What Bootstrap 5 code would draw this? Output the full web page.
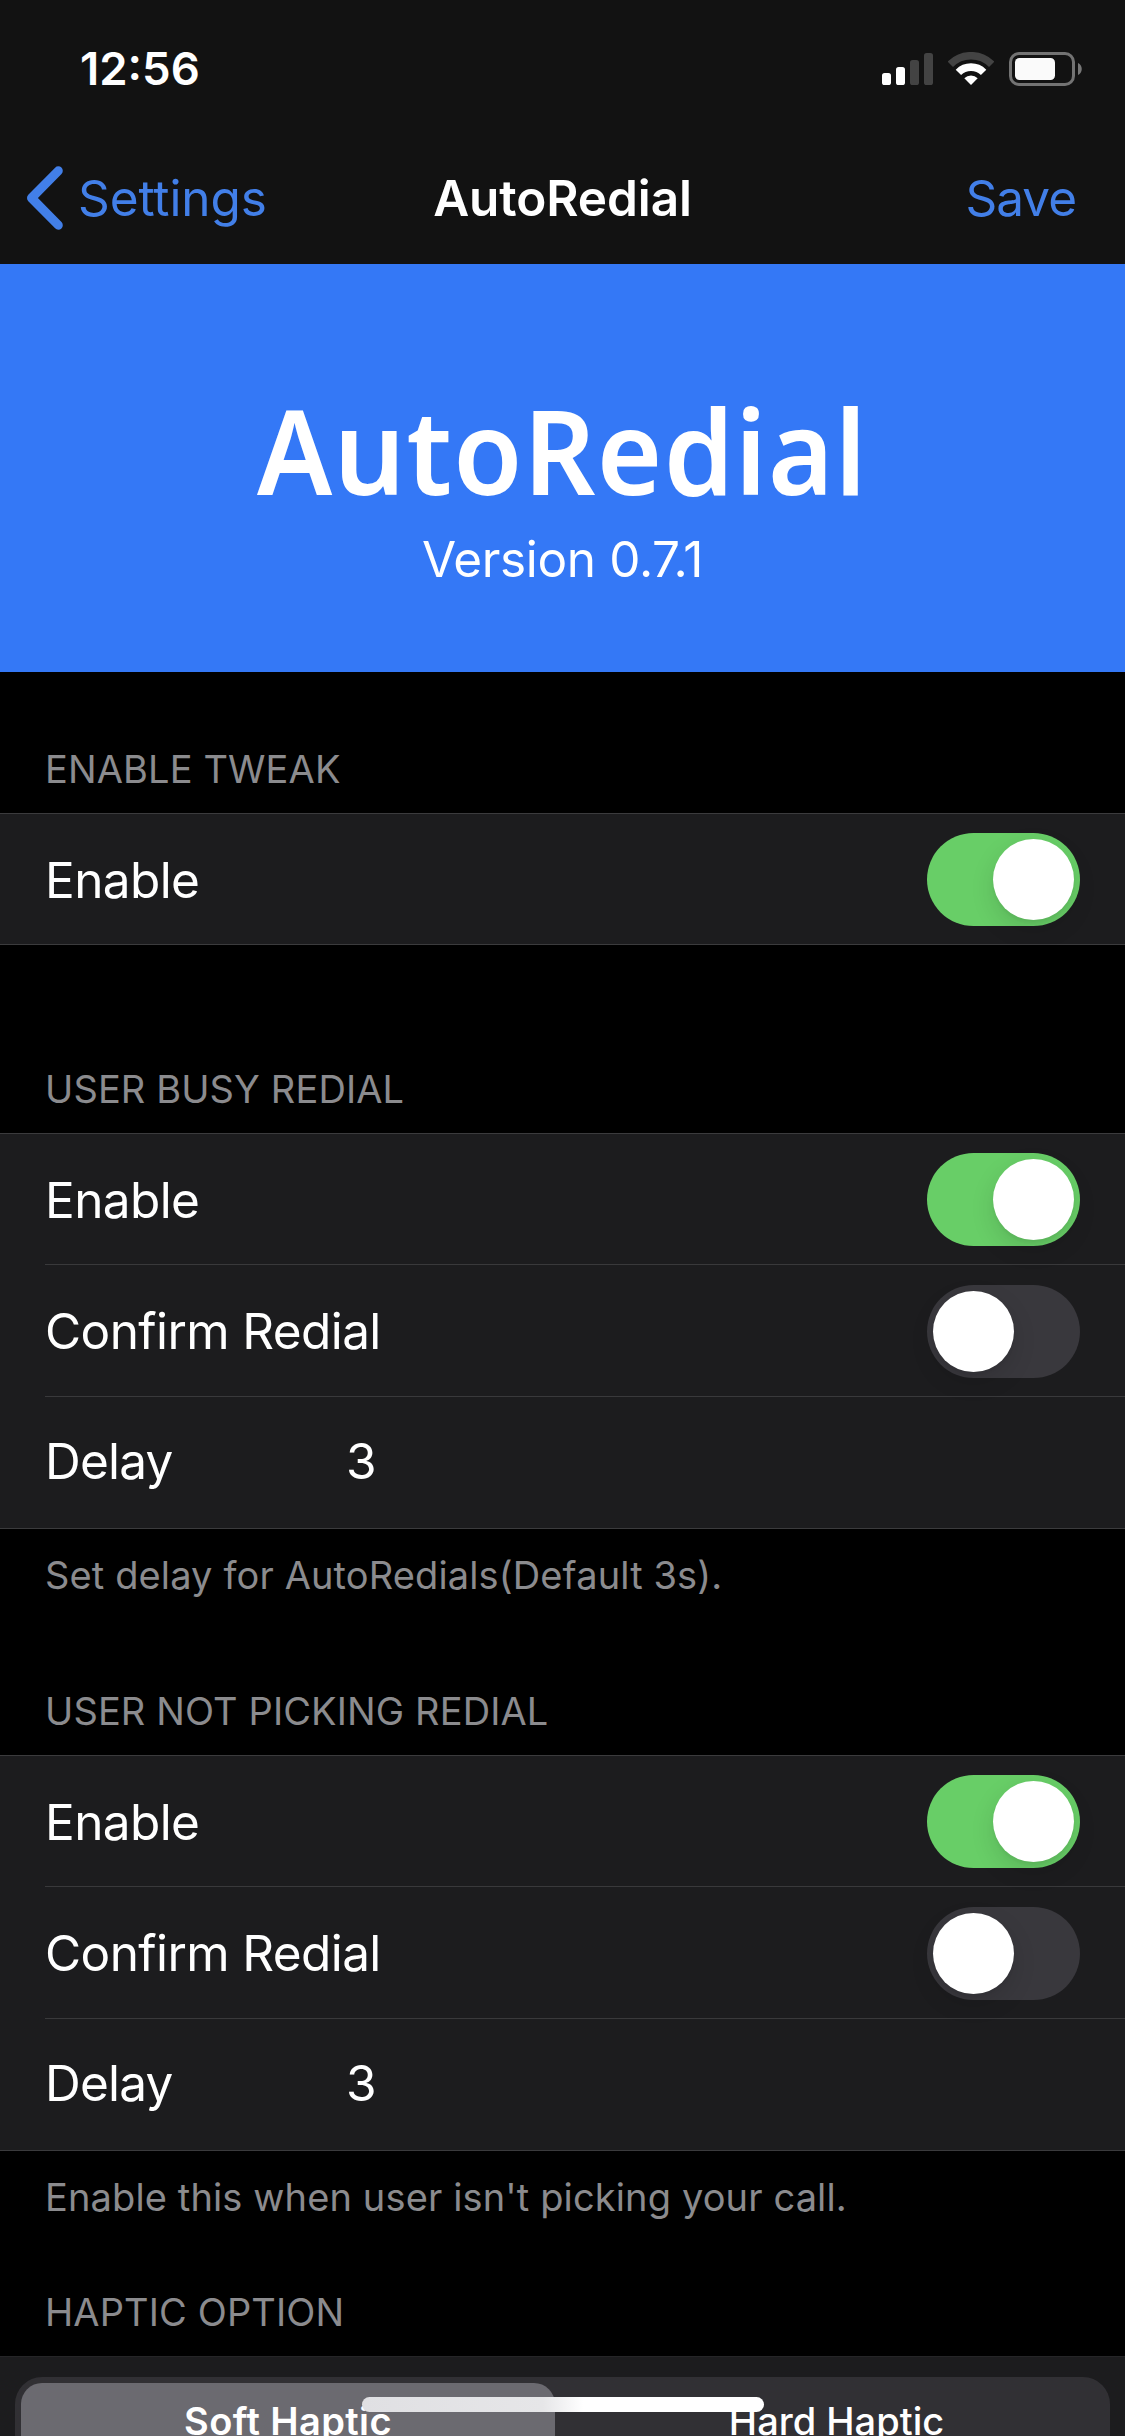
<!DOCTYPE html>
<html lang="en" data-bs-theme="dark">
<head>
<meta charset="utf-8">
<meta name="viewport" content="width=device-width, initial-scale=1">
<title>AutoRedial</title>
<link href="https://cdn.jsdelivr.net/npm/bootstrap@5.3.0/dist/css/bootstrap.min.css" rel="stylesheet">
<style>
  body { background:#000; color:#fff; font-family:Inter,"Liberation Sans",sans-serif; font-size:49.5px; line-height:60px; }
  .phone { height:2436px; }
  .top-area { background:#121212; height:264px; }
  .status-row { height:138px; padding:0 42px 0 80px; }
  .clock { font-size:45.5px; font-weight:600; }
  .status-icons { gap:15px; }
  .title-bar { height:120px; padding:0 26px; }
  .title-bar a { color:#427fe8; text-decoration:none; }
  .back-link { gap:15px; letter-spacing:-.1px; }
  .save-link { letter-spacing:-1px; margin-right:23px; }
  .page-title { font-weight:600; letter-spacing:-.1px; }
  .hero { background:#3478f6; height:408px; padding-top:136px; }
  .hero-title { font:620 118px/100px "Noto Sans","Open Sans",sans-serif; letter-spacing:1.3px; transform:scaleX(.95); }
  .hero-version { font-weight:400; letter-spacing:-.35px; font-feature-settings:"calt" 0; margin-top:29px; }
  .section-head, .section-foot { color:#8b8b8e; font-size:38px; line-height:46px; padding-left:45px; }
  .section-head { padding-bottom:21px; letter-spacing:.12px; }
  .section-foot { padding-top:23px; letter-spacing:.13px; }
  .cells { background:#1c1c1e; border-top:1px solid #3b3b3d; border-bottom:1px solid #3b3b3d; padding-left:45px; }
  .cell-row { height:130px; padding:0 45px 0 0; letter-spacing:-.6px; }
  .cell-row + .cell-row { height:132px; border-top:1px solid #39393b; }
  .cell-row .lbl { padding-top:1px; }
  .cell-row .lbl.field { width:301px; padding:0 0 4px; letter-spacing:-.8px; }
  .cell-row .val { padding-bottom:4px; }
  .cell-row .form-switch { padding:0; min-height:0; margin:0; line-height:0; }
  .cell-row + .cell-row .form-switch { padding-top:1px; }
  .cell-row .form-switch .form-check-input {
    width:153px; height:93px; margin:0; float:none; border:0; border-radius:47px;
    background:#39383d; box-shadow:none; position:relative; }
  .form-switch .form-check-input::before {
    content:""; display:block; width:81px; height:81px; margin:6px; border-radius:50%; background:#fff;
    box-shadow:0 9px 24px rgba(0,0,0,.12),0 3px 3px rgba(0,0,0,.04); }
  .cell-row .form-switch .form-check-input:checked { background:#68ce67; }
  .form-switch .form-check-input:checked::before { margin-left:66px; }
  .haptic { background:#1c1c1e; height:81px; padding:20px 15px 0; border-top:1px solid #252527; }
  .segment { background:#313034; height:96px; border-radius:27px; padding:6px; font-size:38px; line-height:46px; }
  .segment > div { height:84px; padding-top:15px; }
  .segment .chosen { background:#6b6a70; border-radius:21px; font-weight:600; width:534px; flex:none; letter-spacing:.4px; }
  .segment .other { font-weight:500; padding-left:14px; }
  .home-bar { left:362px; bottom:24px; width:402px; height:15px; border-radius:8px; background:linear-gradient(90deg,#e0e0e3,#e6e6e8 45%,#fff 55%); }
</style>
</head>
<body>
<div class="phone position-relative overflow-hidden">
  <header class="top-area">
    <div class="status-row d-flex justify-content-between align-items-center">
      <span class="clock">12:56</span>
      <div class="status-icons d-flex align-items-center">
        <svg width="51" height="34" viewBox="0 0 51 34">
          <rect x="0" y="21" width="9" height="12" rx="2.6" fill="#fff"/>
          <rect x="14" y="15" width="9" height="18" rx="2.6" fill="#fff"/>
          <rect x="28" y="8" width="9" height="25" rx="2.6" fill="#434343"/>
          <rect x="42" y="1" width="9" height="32" rx="2.6" fill="#434343"/>
        </svg>
        <svg width="46" height="34" viewBox="0 0 46 34" fill="none">
          <path d="M2.3 12.3A29.3 29.3 0 0 1 43.7 12.3" stroke="#434343" stroke-width="7.6"/>
          <path d="M10.4 20.4A17.8 17.8 0 0 1 35.6 20.4" stroke="#fff" stroke-width="7.6"/>
          <path d="M23 33l-6.7-6.7A9.6 9.6 0 0 1 29.700 26.300z" fill="#fff"/>
        </svg>
        <svg width="74" height="34" viewBox="0 0 74 34">
          <rect x="1.500" y="1.500" width="63" height="31" rx="8.500" fill="none" stroke="#737373" stroke-width="3"/>
          <rect x="6" y="6" width="40" height="22" rx="4.500" fill="#fafafa"/>
          <path d="M69 11c5 2 5 10 0 12z" fill="#777"/>
        </svg>
      </div>
    </div>
    <nav class="title-bar row g-0 align-items-center">
      <div class="col">
        <a href="#" class="back-link d-flex align-items-center">
          <svg width="37" height="64" viewBox="0 0 37 64"><path d="M32.300 4.800L5.500 32l26.800 27.200" fill="none" stroke="#427fe8" stroke-width="9" stroke-linecap="round" stroke-linejoin="round"/></svg>
          <span>Settings</span>
        </a>
      </div>
      <div class="col-auto page-title">AutoRedial</div>
      <div class="col text-end"><a href="#" class="save-link">Save</a></div>
    </nav>
  </header>

  <section class="hero d-flex flex-column align-items-center">
    <div class="hero-title">AutoRedial</div>
    <div class="hero-version">Version 0.7.1</div>
  </section>

  <main>
    <div class="section-head" style="padding-top:74px">ENABLE TWEAK</div>
    <div class="cells">
      <div class="cell-row d-flex align-items-center justify-content-between">
        <span class="lbl">Enable</span>
        <div class="form-check form-switch"><input class="form-check-input" type="checkbox" checked></div>
      </div>
    </div>

    <div class="section-head" style="padding-top:121px">USER BUSY REDIAL</div>
    <div class="cells">
      <div class="cell-row d-flex align-items-center justify-content-between">
        <span class="lbl">Enable</span>
        <div class="form-check form-switch"><input class="form-check-input" type="checkbox" checked></div>
      </div>
      <div class="cell-row d-flex align-items-center justify-content-between">
        <span class="lbl">Confirm Redial</span>
        <div class="form-check form-switch"><input class="form-check-input" type="checkbox"></div>
      </div>
      <div class="cell-row d-flex align-items-center">
        <span class="lbl field">Delay</span><span class="val">3</span>
      </div>
    </div>
    <div class="section-foot">Set delay for AutoRedials(Default 3s).</div>

    <div class="section-head" style="padding-top:90px">USER NOT PICKING REDIAL</div>
    <div class="cells">
      <div class="cell-row d-flex align-items-center justify-content-between">
        <span class="lbl">Enable</span>
        <div class="form-check form-switch"><input class="form-check-input" type="checkbox" checked></div>
      </div>
      <div class="cell-row d-flex align-items-center justify-content-between">
        <span class="lbl">Confirm Redial</span>
        <div class="form-check form-switch"><input class="form-check-input" type="checkbox"></div>
      </div>
      <div class="cell-row d-flex align-items-center">
        <span class="lbl field">Delay</span><span class="val">3</span>
      </div>
    </div>
    <div class="section-foot">Enable this when user isn't picking your call.</div>

    <div class="section-head" style="padding-top:69px">HAPTIC OPTION</div>
    <div class="haptic">
      <div class="segment d-flex text-center">
        <div class="chosen">Soft Haptic</div>
        <div class="other flex-fill">Hard Haptic</div>
      </div>
    </div>
  </main>
  <div class="home-bar position-absolute"></div>
</div>
<script src="https://cdn.jsdelivr.net/npm/bootstrap@5.3.0/dist/js/bootstrap.bundle.min.js"></script>
</body>
</html>
